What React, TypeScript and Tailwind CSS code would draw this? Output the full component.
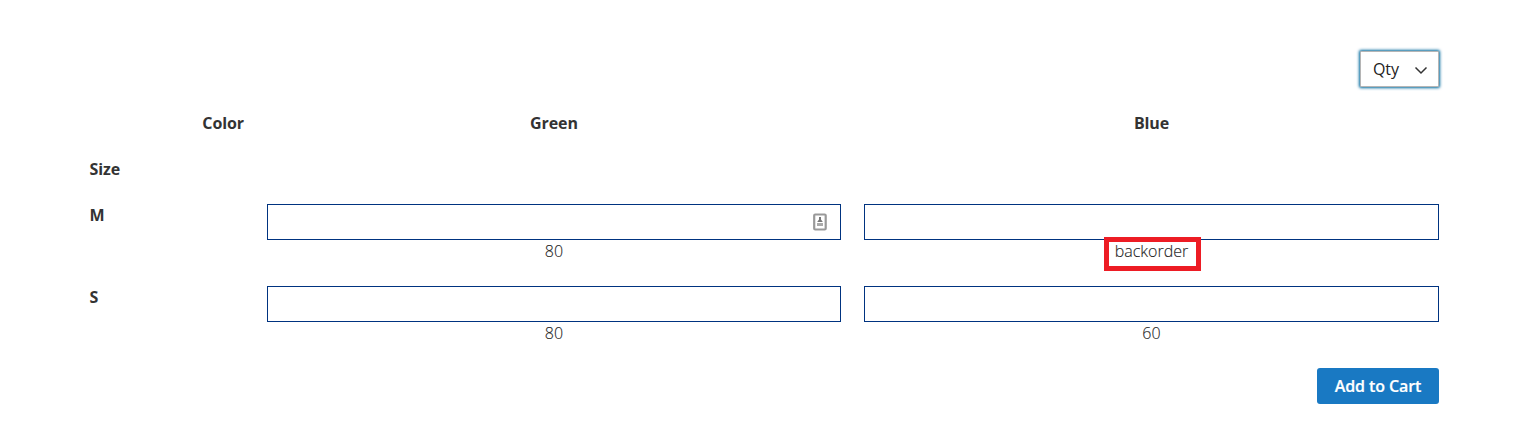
import React from "react";

function Field({ note, marked, icon }: { note: string; marked?: boolean; icon?: boolean }) {
  return (
    <div className="flex flex-col text-center text-base leading-[22px] font-light tracking-[0.02px] text-[#1a1a1a]">
      <div className="relative h-9">
        <input className="block h-9 w-full border border-[#003380] bg-white px-2 outline-none" />
        {icon && (
          <svg className="absolute top-[9px] right-[13px]" width="16" height="18" viewBox="0 0 16 18">
            <rect x="2.2" y="1.5" width="11.5" height="15" rx="1" fill="#fff" stroke="#999" strokeWidth="2.2" />
            <path d="M7 4h2v2.4l1.8 2.6H5.2L7 6.4z" fill="#777" />
            <path d="M5 10h6v3H5z" fill="#aaa" />
          </svg>
        )}
      </div>
      <div className="relative h-[23px]">
        <span className="[-webkit-text-stroke:0.12px_#333]">{note}</span>
        {marked && <span className="absolute -top-[3px] left-[240px] h-[34px] w-[97px] border-[5px] border-[#ed1c24]" />}
      </div>
    </div>
  );
}

export default function App() {
  return (
    <main className="h-[432px] w-[1522px] bg-white pt-[51px] pl-[90px] font-['Open_Sans',sans-serif] text-base text-[#333]">
      <div className="flex w-[1349px] flex-col">
        <div className="flex justify-end">
          <button className="flex h-9 w-[79px] items-center rounded-[1px] border border-[#b5b5b5] bg-white pl-3 text-base text-[#222] shadow-[0_0_3px_1px_#00699d]">
            <span className="tracking-[-0.1px]">Qty</span>
            <svg className="mt-0.5 ml-[15.5px]" width="14" height="9" viewBox="0 0 14 9" fill="none">
              <path d="M1.5 1.5 7 7l5.5-5.5" stroke="#333" strokeWidth="1.5" />
            </svg>
          </button>
        </div>
        <div className="mt-[25px] grid grid-cols-[154px_574px_575px] grid-rows-[46px_46px_82px_60px] gap-x-[23px] leading-[22px] font-bold tracking-[-0.1px]">
          <div className="text-right">Color</div>
          <div className="text-center">Green</div>
          <div className="text-center">Blue</div>
          <div className="col-span-3 -ml-[0.5px]">Size</div>
          <div className="-ml-[0.5px]">M</div>
          <Field note="80" icon />
          <Field note="backorder" marked />
          <div className="-ml-[0.5px]">S</div>
          <Field note="80" />
          <Field note="60" />
        </div>
        <div className="mt-[22px] flex justify-end">
          <button className="h-9 w-[122px] rounded-[3px] bg-[#1979c3] text-base font-semibold tracking-[-0.1px] text-white [-webkit-text-stroke:0.2px_white]">Add to Cart</button>
        </div>
      </div>
    </main>
  );
}
